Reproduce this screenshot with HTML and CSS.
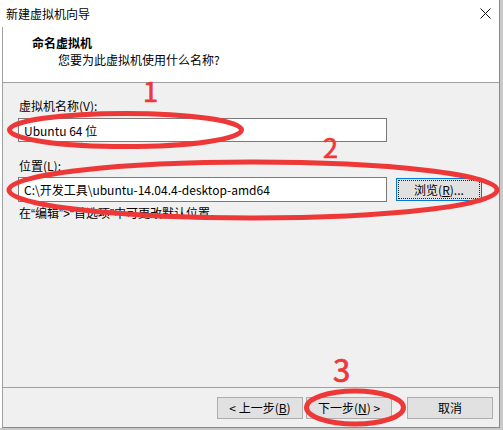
FILE: index.html
```html
<!DOCTYPE html>
<html lang="zh-CN">
<head>
<meta charset="utf-8">
<title>新建虚拟机向导</title>
<link rel="stylesheet" href="styles.css">
</head>
<body>
<div class="window">
  <div class="titlebar">
    <span class="title">新建虚拟机向导</span>
    <svg class="close" width="11" height="11" viewBox="0 0 11 11"><path d="M0.5 0.5L10.5 10.5M10.5 0.5L0.5 10.5" stroke="#111" stroke-width="1" fill="none"/></svg>
  </div>
  <div class="frame">
    <div class="header">
      <div class="h-title">命名虚拟机</div>
      <div class="h-sub">您要为此虚拟机使用什么名称?</div>
    </div>
    <div class="content">
      <div class="label">虚拟机名称(V):</div>
      <div class="textbox name">Ubuntu 64 位</div>
      <div class="label loc-label">位置(L):</div>
      <div class="row">
        <div class="textbox path">C:\开发工具\ubuntu-14.04.4-desktop-amd64</div>
        <div class="btn browse"><span class="focus">浏览(<u>R</u>)...</span></div>
      </div>
      <div class="hint">在“编辑”&gt;“首选项”中可更改默认位置。</div>
    </div>
    <div class="footer">
      <div class="btn">&lt; 上一步(<u>B</u>)</div>
      <div class="btn next">下一步(<u>N</u>) &gt;</div>
      <div class="btn cancel">取消</div>
    </div>
  </div>
</div>
<svg class="annot" width="503" height="430" viewBox="0 0 503 430">
  <g fill="none" stroke="#ee3838" stroke-width="5">
    <ellipse cx="125.5" cy="130" rx="116" ry="16.5"/>
    <ellipse cx="253" cy="190" rx="244" ry="28"/>
    <ellipse cx="355" cy="407.5" rx="48.5" ry="16.5"/>
  </g>
  <g class="nums" fill="#ee3838" stroke="#ee3838" stroke-width="0.7">
    <text x="143" y="102" font-size="27">1</text>
    <text x="323" y="158" font-size="27">2</text>
    <text x="333" y="382" font-size="31">3</text>
  </g>
</svg>
</body>
</html>
```
FILE: styles.css
```css
html, body {
  margin: 0;
  padding: 0;
}
body {
  width: 503px;
  height: 430px;
  overflow: hidden;
  position: relative;
  background: #c9c9c9;
  font-family: "Noto Sans CJK SC", "Microsoft YaHei", sans-serif;
  font-size: 12px;
  color: #000;
}
.window {
  width: 500px;
  height: 428px;
  box-sizing: border-box;
  border-right: 1px solid #8a8a8a;
  background: #fff;
}
.titlebar {
  height: 27px;
  background: #fff;
  display: flex;
  align-items: center;
  justify-content: space-between;
  padding: 0 8px 0 6px;
}
.title {
  line-height: 16px;
}
.close {
  display: block;
}
.frame {
  margin-left: 2px;
  border-left: 1px solid #a0a0a0;
  border-bottom: 1px solid #8a8a8a;
  height: 401px;
  box-sizing: border-box;
  display: flex;
  flex-direction: column;
}
.header {
  box-sizing: border-box;
  height: 56px;
  background: #fff;
  border-bottom: 1px solid #a0a0a0;
  padding: 8px 0 0 29px;
}
.h-title {
  font-weight: 700;
  line-height: 16px;
}
.h-sub {
  line-height: 16px;
  padding-left: 26px;
  margin-top: 1px;
}
.content {
  height: 305px;
  box-sizing: border-box;
  background: #f0f0f0;
  border-bottom: 1px solid #a0a0a0;
  padding: 15px 0 0 15px;
}
.label {
  line-height: 16px;
  padding-left: 1px;
}
.textbox {
  width: 369px;
  box-sizing: border-box;
  background: #fff;
  border: 1px solid #7a7a7a;
  padding-left: 5px;
  display: flex;
  align-items: center;
  white-space: nowrap;
}
.name {
  height: 24px;
  margin-top: 4px;
}
.loc-label {
  margin-top: 16px;
}
.row {
  display: flex;
  align-items: center;
  gap: 9px;
  margin-top: 3px;
}
.path {
  height: 25px;
}
.btn {
  width: 86px;
  height: 22px;
  box-sizing: border-box;
  background: #e1e1e1;
  border: 1px solid #adadad;
  display: flex;
  align-items: center;
  justify-content: center;
  white-space: nowrap;
  line-height: 16px;
}
.browse {
  height: 23px;
  border-color: #0078d7;
  position: relative;
}
.browse .focus {
  display: flex;
  align-items: center;
  justify-content: center;
  position: absolute;
  inset: 2px;
  outline: 1px dotted #222;
}
.hint {
  margin-top: 4px;
  line-height: 16px;
  padding-left: 1px;
  font-family: "Liberation Sans", "Noto Sans CJK SC", sans-serif;
  letter-spacing: 0;
}
.footer {
  height: 39px;
  background: #f0f0f0;
  display: flex;
  justify-content: flex-end;
  align-items: flex-start;
  padding: 9px 6px 0 0;
  box-sizing: border-box;
}
.next {
  margin-left: 3px;
}
.cancel {
  margin-left: 15px;
}
u {
  text-decoration: underline;
  text-underline-offset: 1px;
}
.annot {
  position: absolute;
  left: 0;
  top: 0;
  pointer-events: none;
}
.nums {
  font-family: "Noto Sans CJK SC", "DejaVu Sans", sans-serif;
}
```
